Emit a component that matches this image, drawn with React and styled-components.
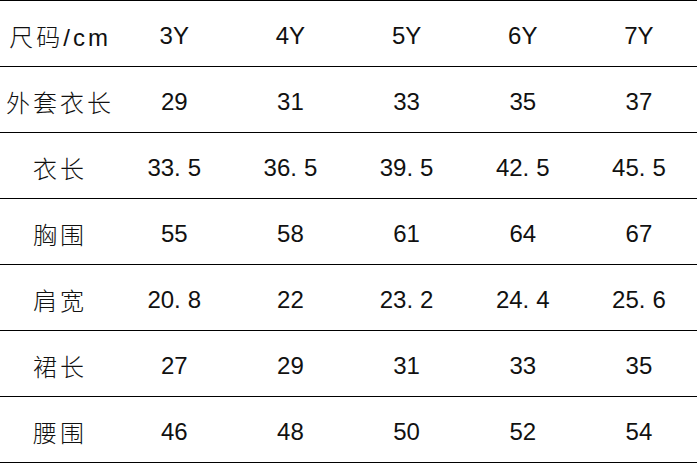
import React from "react";
import styled, { createGlobalStyle } from "styled-components";

const GlobalStyle = createGlobalStyle`
  html, body {
    margin: 0;
    padding: 0;
    background: #fff;
  }
  body {
    font-family: "Liberation Sans", "Noto Sans CJK SC", sans-serif;
    color: #111;
  }
`;

const Table = styled.div`
  width: 697px;
  border-top: 1px solid #000;
`;

const Row = styled.div`
  display: grid;
  grid-template-columns: repeat(6, 1fr);
  height: 65px;
  border-bottom: 1px solid #000;
`;

const Cell = styled.div`
  display: flex;
  align-items: center;
  justify-content: center;
  padding-top: 4px;
  padding-left: ${p => (p.label ? "4px" : "0")};
  font-size: 24px;
  font-weight: ${p => (p.label ? 300 : 400)};
  letter-spacing: ${p => (p.label ? "3px" : "0")};
  white-space: nowrap;
`;

const Dot = styled.span`
  margin-right: 7px;
`;

const sizes = ["3Y", "4Y", "5Y", "6Y", "7Y"];

const rows = [
  ["外套衣长", "29", "31", "33", "35", "37"],
  ["衣长", "33.5", "36.5", "39.5", "42.5", "45.5"],
  ["胸围", "55", "58", "61", "64", "67"],
  ["肩宽", "20.8", "22", "23.2", "24.4", "25.6"],
  ["裙长", "27", "29", "31", "33", "35"],
  ["腰围", "46", "48", "50", "52", "54"]
];

const Value = ({ text }) => {
  if (!text.includes(".")) return text;
  const [whole, frac] = text.split(".");
  return (
    <>
      {whole}
      <Dot>.</Dot>
      {frac}
    </>
  );
};

export default function App() {
  return (
    <>
      <GlobalStyle />
      <Table>
        <Row>
          <Cell label>尺码/cm</Cell>
          {sizes.map(s => (
            <Cell key={s}>{s}</Cell>
          ))}
        </Row>
        {rows.map(([name, ...vals]) => (
          <Row key={name}>
            <Cell label>{name}</Cell>
            {vals.map((v, i) => (
              <Cell key={i}>
                <Value text={v} />
              </Cell>
            ))}
          </Row>
        ))}
      </Table>
    </>
  );
}
